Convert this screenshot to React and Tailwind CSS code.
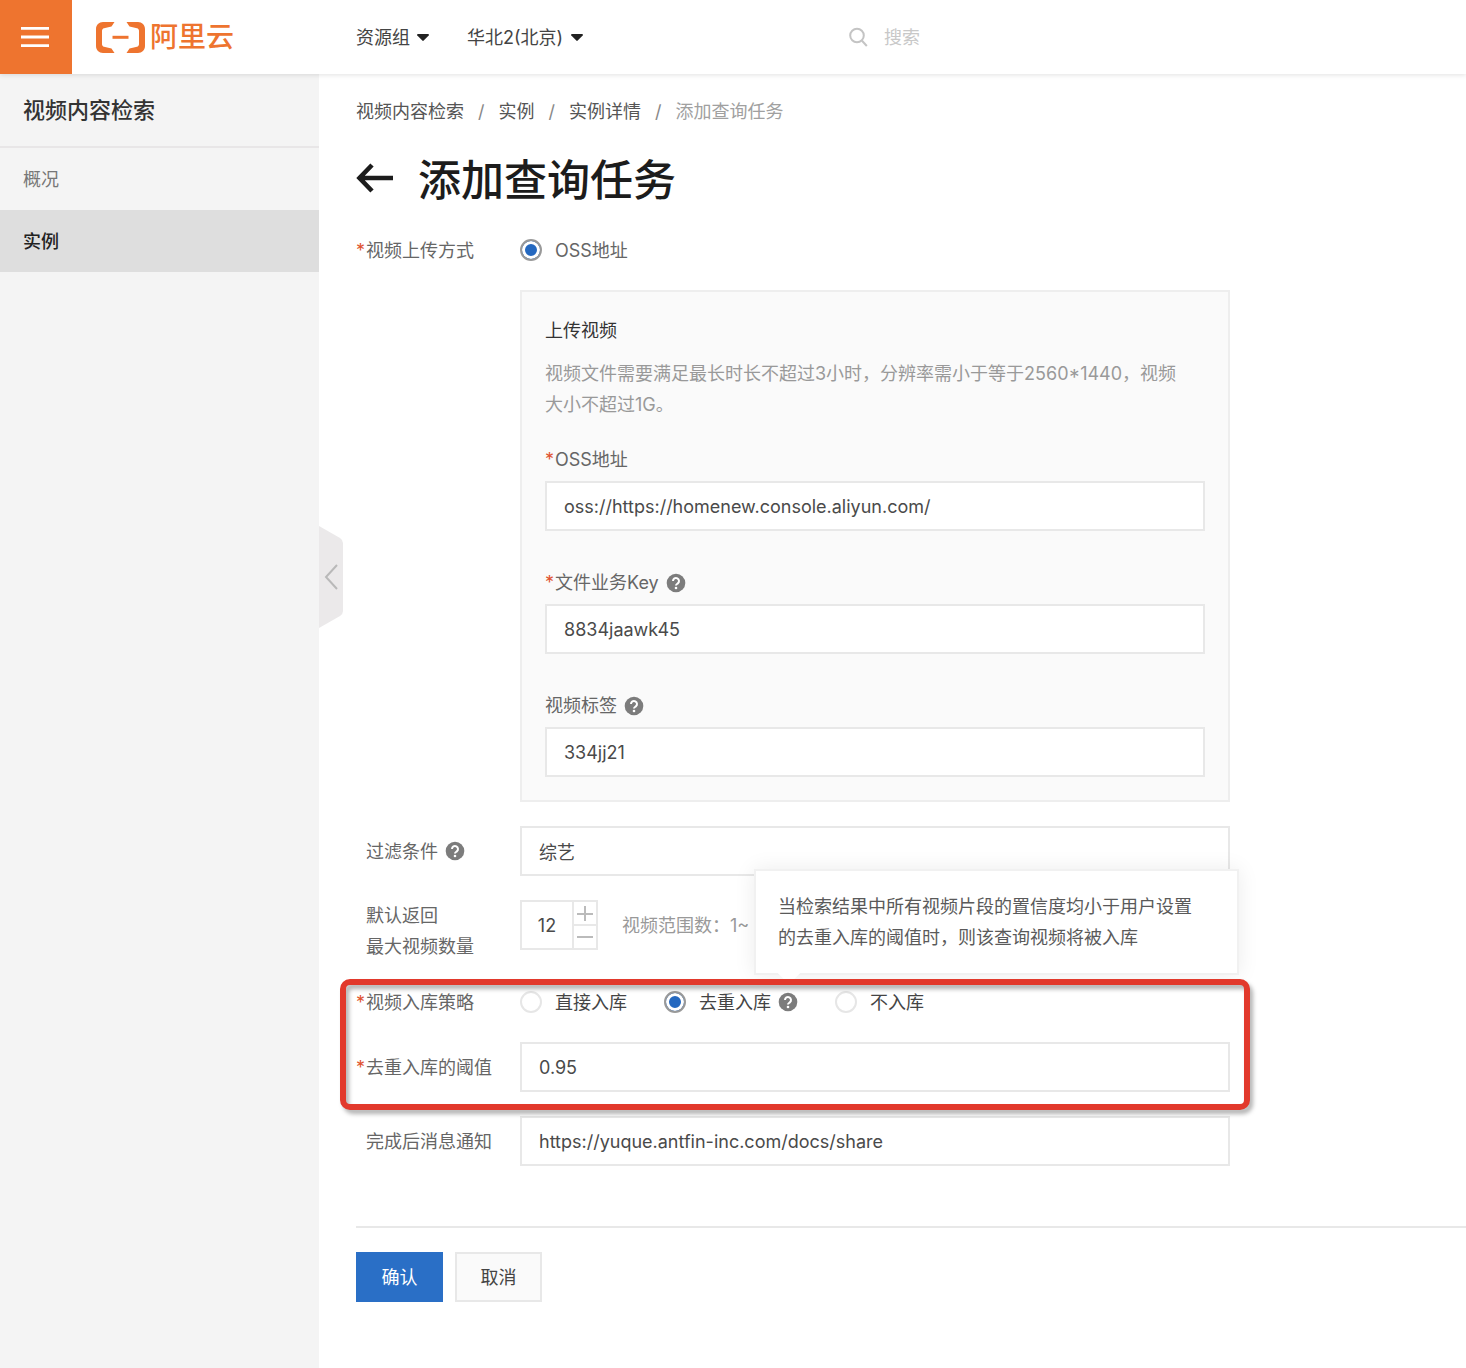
import React, { useState } from "react";

const strategies = [
  { value: "direct", label: "直接入库" },
  { value: "dedupe", label: "去重入库" },
  { value: "none", label: "不入库" },
];

const breadcrumbs = ["视频内容检索", "实例", "实例详情"];

const inputClass =
  "w-full h-[50px] border-2 border-[#e8e8e8] bg-white px-[17px] text-[18px] text-[#4a4a4a] outline-none focus:border-[#2a6fc6]";

const radioClass =
  "appearance-none shrink-0 size-[22px] rounded-full border-2 border-[#e6e6e6] bg-white checked:border-[#999] checked:bg-[#2468c0] checked:shadow-[inset_0_0_0_3px_#fff]";

const Logo = () => (
  <svg width="49" height="31" viewBox="0 0 49 31" fill="#ee742f">
    <path
      id="bracket"
      d="M18.5 0H7C3 0 0 3 0 7v17c0 4 3 7 7 7h11.5l-3-4.5L8 24.8c-1.2-.3-2-1.3-2-2.5V8.7c0-1.2.8-2.2 2-2.5l7.5-1.7z"
    />
    <use href="#bracket" transform="translate(49 0) scale(-1 1)" />
    <path d="M16.5 13.8h16v3h-16z" />
  </svg>
);

const Caret = () => (
  <svg
    width="12"
    height="7"
    viewBox="0 0 12 7"
    className="pointer-events-none"
    fill="#222"
  >
    <path d="M1 0h10c.8 0 1.2.8.7 1.4L6.7 6.6c-.4.4-1 .4-1.4 0L.3 1.4C-.2.8.2 0 1 0z" />
  </svg>
);

const HelpIcon = () => (
  <svg width="20" height="20" viewBox="0 0 20 20" className="shrink-0">
    <circle cx="10" cy="10" r="9.3" fill="#7c7c7c" />
    <path
      d="M7 8a3 3 0 1 1 4.8 2.4C10.7 11.2 10 11.5 10 12.6"
      fill="none"
      stroke="#fff"
      strokeWidth="2"
    />
    <circle cx="10" cy="15" r="1.3" fill="#fff" />
  </svg>
);

const Required = ({ show = true }) => (
  <span className="w-[10px] shrink-0 text-[#e0532f]">{show ? "*" : ""}</span>
);

const FormRow = ({ label, htmlFor, required, help, top, children }) => (
  <div className={`flex ${top ? "items-start" : "items-center"}`}>
    <div className="flex w-[164px] shrink-0 items-center leading-[31px] text-[#666]">
      <Required show={!!required} />
      <label htmlFor={htmlFor} className="whitespace-pre-line">
        {label}
      </label>
      {help && (
        <span className="ml-[7px]">
          <HelpIcon />
        </span>
      )}
    </div>
    <div className="flex min-h-8 min-w-0 flex-1 items-center">{children}</div>
  </div>
);

const PanelField = ({ id, label, required, help, value, onChange }) => (
  <div>
    <div className="mb-[6px] flex items-center leading-[31px] text-[#666]">
      {required && <Required />}
      <label htmlFor={id}>{label}</label>
      {help && (
        <span className="ml-[7px]">
          <HelpIcon />
        </span>
      )}
    </div>
    <input
      id={id}
      name={id}
      type="text"
      className={inputClass}
      value={value}
      onChange={onChange}
    />
  </div>
);

const Tooltip = () => (
  <div
    role="tooltip"
    className="absolute bottom-[37px] -left-6 z-10 w-[485px] border-2 border-[#f1f1f1] bg-white py-[20px] pr-7 pl-[22px] leading-[31px] text-[#5a5a5a] shadow-[0_0_20px_rgba(0,0,0,0.08)]"
  >
    当检索结果中所有视频片段的置信度均小于用户设置的去重入库的阈值时，则该查询视频将被入库
    <span className="absolute -bottom-2 left-[25px] size-4 rotate-45 bg-white" />
  </div>
);

const Header = () => (
  <header className="relative z-20 flex h-[74px] items-center bg-white shadow-[0_1px_5px_rgba(0,0,0,0.12)]">
    <button
      type="button"
      aria-label="菜单"
      className="flex h-full w-[72px] shrink-0 items-center justify-center bg-[#ee742f] pr-[2px]"
    >
      <svg width="28" height="20" viewBox="0 0 28 20" fill="#fff">
        <path d="M0 0h28v2.8H0zM0 8.6h28v2.8H0zM0 17.2h28V20H0z" />
      </svg>
    </button>
    <a
      href="#"
      className="flex w-[284px] shrink-0 items-center gap-[5px] pl-6 text-[28px] font-medium text-[#ee742f]"
    >
      <Logo />
      <span>阿里云</span>
    </a>
    <div className="flex shrink-0 items-center gap-[38px] text-[#444]">
      <label className="flex items-center gap-[7px]">
        <select aria-label="资源组" className="appearance-none bg-transparent">
          <option>资源组</option>
        </select>
        <Caret />
      </label>
      <label className="flex items-center gap-[7px]">
        <select aria-label="地域" className="appearance-none bg-transparent">
          <option>华北2(北京)</option>
        </select>
        <Caret />
      </label>
    </div>
    <div className="ml-[266px] flex min-w-0 flex-1 items-center gap-4">
      <svg
        width="19"
        height="20"
        viewBox="0 0 19 20"
        fill="none"
        stroke="#c4c4c4"
        strokeWidth="2"
        className="shrink-0"
      >
        <circle cx="8" cy="8.5" r="6.8" />
        <path d="M12.8 13.5l5 5.5" />
      </svg>
      <input
        type="search"
        aria-label="搜索"
        placeholder="搜索"
        className="min-w-0 flex-1 bg-transparent outline-none placeholder:text-[#c8c8c8]"
      />
    </div>
  </header>
);

const Sidebar = () => (
  <aside className="relative w-[319px] shrink-0 bg-[#f4f4f4]">
    <h2 className="flex h-[74px] items-center border-b-2 border-[#e8e6e7] px-[23px] text-[22px] font-medium text-[#333]">
      视频内容检索
    </h2>
    <nav className="flex flex-col">
      <a href="#" className="flex h-[62px] items-center px-[23px] text-[#777]">
        概况
      </a>
      <a
        href="#"
        aria-current="page"
        className="flex h-[62px] items-center bg-[#dedede] px-[23px] font-medium text-[#222]"
      >
        实例
      </a>
    </nav>
    <button
      type="button"
      aria-label="收起"
      className="absolute top-[452px] -right-[25px]"
    >
      <svg width="25" height="102" viewBox="0 0 25 102">
        <path d="M0 0l21 12q3 2 3 5v68q0 3-3 5L0 102z" fill="#ebe9ea" />
        <path
          d="M18 39L7 51l11 12"
          fill="none"
          stroke="#b9b9b9"
          strokeWidth="2"
        />
      </svg>
    </button>
  </aside>
);

const App = () => {
  const [form, setForm] = useState({
    oss: "oss://https://homenew.console.aliyun.com/",
    fileKey: "8834jaawk45",
    tag: "334jj21",
    filter: "综艺",
    threshold: "0.95",
    notify: "https://yuque.antfin-inc.com/docs/share",
  });
  const [count, setCount] = useState(12);
  const [strategy, setStrategy] = useState("dedupe");

  const handleChange = (key) => (e) =>
    setForm((prev) => ({ ...prev, [key]: e.target.value }));

  return (
    <div className="flex min-h-screen flex-col bg-white font-[Inter,'Noto_Sans_CJK_SC',sans-serif] text-[18px]">
      <Header />
      <div className="flex flex-1">
        <Sidebar />
        <main className="min-w-0 flex-1 pt-[22px] pb-16 pl-[37px]">
          <nav className="flex gap-[14px] leading-8 text-[#555]">
            {breadcrumbs.map((item) => (
              <React.Fragment key={item}>
                <a href="#">{item}</a>
                <span className="text-[#888]">/</span>
              </React.Fragment>
            ))}
            <span className="text-[#a0a0a0]">添加查询任务</span>
          </nav>

          <div className="mt-[22px] flex items-center gap-6">
            <button type="button" aria-label="返回">
              <svg
                width="38"
                height="34"
                viewBox="0 0 38 34"
                fill="none"
                stroke="#1c1c1c"
                strokeWidth="4.6"
              >
                <path d="M37 15H4M16 2L3.500 15 16 28" />
              </svg>
            </button>
            <h1 className="text-[43px] leading-[60px] font-medium text-[#1c1c1c]">
              添加查询任务
            </h1>
          </div>

          <form onSubmit={(e) => e.preventDefault()} className="mt-6">
            <div className="flex max-w-[874px] flex-col gap-6">
              <FormRow label="视频上传方式" htmlFor="source" required>
                <label className="flex items-center gap-[13px] text-[#666]">
                  <input
                    id="source"
                    type="radio"
                    name="source"
                    defaultChecked
                    className={radioClass}
                  />
                  OSS地址
                </label>
              </FormRow>

              <section className="ml-[164px] border-2 border-[#eee] bg-[#fafafa] p-[23px]">
                <h3 className="leading-[31px] text-[#333]">上传视频</h3>
                <p className="mt-3 pr-6 leading-[31px] text-[#999]">
                  视频文件需要满足最长时长不超过3小时，分辨率需小于等于2560*1440，视频大小不超过1G。
                </p>
                <div className="mt-6 flex flex-col gap-9">
                  <PanelField
                    id="oss"
                    label="OSS地址"
                    required
                    value={form.oss}
                    onChange={handleChange("oss")}
                  />
                  <PanelField
                    id="fileKey"
                    label="文件业务Key"
                    required
                    help
                    value={form.fileKey}
                    onChange={handleChange("fileKey")}
                  />
                  <PanelField
                    id="tag"
                    label="视频标签"
                    help
                    value={form.tag}
                    onChange={handleChange("tag")}
                  />
                </div>
              </section>

              <FormRow label="过滤条件" htmlFor="filter" help>
                <input
                  id="filter"
                  type="text"
                  className={inputClass}
                  value={form.filter}
                  onChange={handleChange("filter")}
                />
              </FormRow>

              <FormRow
                label={"默认返回\n最大视频数量"}
                htmlFor="count"
                top
              >
                <div className="flex h-[50px] w-[78px] shrink-0 border-2 border-[#e8e8e8]">
                  <input
                    id="count"
                    type="text"
                    inputMode="numeric"
                    className="w-[50px] text-center text-[#4a4a4a] outline-none"
                    value={count}
                    onChange={(e) => setCount(Number(e.target.value) || 0)}
                  />
                  <div className="flex flex-1 flex-col border-l-2 border-[#e8e8e8]">
                    <button
                      type="button"
                      aria-label="增加"
                      onClick={() => setCount(count + 1)}
                      className="flex flex-1 items-center justify-center border-b-2 border-[#e8e8e8]"
                    >
                      <svg width="16" height="16" viewBox="0 0 16 16">
                        <path d="M0 9h16M8 1v15" stroke="#bbb" strokeWidth="2" />
                      </svg>
                    </button>
                    <button
                      type="button"
                      aria-label="减少"
                      onClick={() => setCount(Math.max(1, count - 1))}
                      className="flex flex-1 items-center justify-center"
                    >
                      <svg width="16" height="16" viewBox="0 0 16 16">
                        <path d="M0 8h16" stroke="#bbb" strokeWidth="2" />
                      </svg>
                    </button>
                  </div>
                </div>
                <span className="ml-6 text-[#999]">视频范围数：1~</span>
              </FormRow>

              <div className="relative flex flex-col gap-6">
                <FormRow label="视频入库策略" required>
                  <div className="flex items-center gap-[37px]">
                    {strategies.map((s) => (
                      <div key={s.value} className="flex items-center gap-[7px]">
                        <label className="flex items-center gap-[13px] text-[#444]">
                          <input
                            type="radio"
                            name="strategy"
                            value={s.value}
                            checked={strategy === s.value}
                            onChange={() => setStrategy(s.value)}
                            className={radioClass}
                          />
                          {s.label}
                        </label>
                        {s.value === "dedupe" && (
                          <span className="relative">
                            <HelpIcon />
                            <Tooltip />
                          </span>
                        )}
                      </div>
                    ))}
                  </div>
                </FormRow>

                <FormRow label="去重入库的阈值" htmlFor="threshold" required>
                  <input
                    id="threshold"
                    type="text"
                    className={inputClass}
                    value={form.threshold}
                    onChange={handleChange("threshold")}
                  />
                </FormRow>

                {/* highlight frame */}
                <div className="pointer-events-none absolute -top-[7px] -right-5 -bottom-[18px] -left-4 z-20 rounded-[10px] border-6 border-[#e2392c] drop-shadow-[3px_4px_2px_rgba(0,0,0,0.3)]" />
              </div>

              <FormRow label="完成后消息通知" htmlFor="notify">
                <input
                  id="notify"
                  type="text"
                  className={inputClass}
                  value={form.notify}
                  onChange={handleChange("notify")}
                />
              </FormRow>
            </div>

            <div className="mt-[60px] flex gap-3 border-t-2 border-[#e8e8e8] pt-6">
              <button
                type="submit"
                className="h-[50px] w-[87px] bg-[#2a6fc6] text-white"
              >
                确认
              </button>
              <button
                type="button"
                className="h-[50px] w-[87px] border-2 border-[#e8e8e8] bg-[#fafafa] text-[#444]"
              >
                取消
              </button>
            </div>
          </form>
        </main>
      </div>
    </div>
  );
};

export default App;
